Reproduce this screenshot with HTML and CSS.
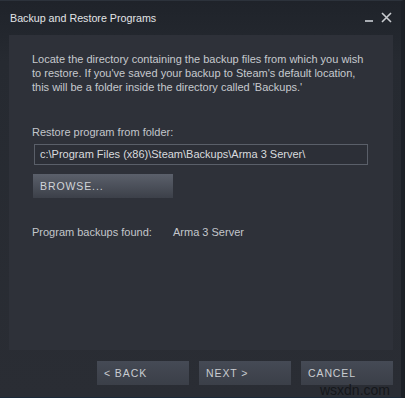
FILE: index.html
```html
<!DOCTYPE html>
<html>
<head>
  <meta charset="UTF-8">
  <title>Backup and Restore Programs</title>
  <link rel="stylesheet" href="styles.css">
</head>
<body>
  <div class="window">
    <div class="titlebar">
      <span class="title">Backup and Restore Programs</span>
      <div class="controls">
        <span class="minimize"></span>
        <svg class="close" width="11" height="11" viewBox="0 0 11 11">
          <path d="M1 1 L10 10 M10 1 L1 10" stroke="#c9ccd0" stroke-width="1.6"/>
        </svg>
      </div>
    </div>

    <div class="panel">
      <p class="intro">Locate the directory containing the backup files from which you wish to restore. If you've saved your backup to Steam's default location, this will be a folder inside the directory called 'Backups.'</p>

      <div class="label">Restore program from folder:</div>
      <div class="path-input">c:\Program Files (x86)\Steam\Backups\Arma 3 Server\</div>
      <button class="btn browse">BROWSE...</button>

      <div class="found">
        <span class="found-label">Program backups found:</span>
        <span class="found-value">Arma 3 Server</span>
      </div>
    </div>

    <div class="footer">
      <button class="btn nav">&lt; BACK</button>
      <button class="btn nav">NEXT &gt;</button>
      <button class="btn nav">CANCEL</button>
    </div>

    <span class="watermark">wsxdn.com</span>
  </div>
</body>
</html>
```

FILE: styles.css
```css
/* Steam dialog */
body {
  margin: 0;
  background-color: #1b1e23;
  font-family: "Liberation Sans", Arial, sans-serif;
  font-size: 11px;
}
.window {
  position: relative;
  width: 401px;
  height: 396px;
  background: linear-gradient(to bottom, #1f232a 0px, #262a31 60px, #2a2d34 100%);
  border-right: 3px solid #1c2027;
  border-bottom: 2px solid #1b2a3a;
  border-top: 1px solid #2c323b;
  box-sizing: content-box;
  display: flex;
  flex-direction: column;
}
.titlebar {
  height: 34px;
  display: flex;
  justify-content: space-between;
  align-items: center;
  padding: 0 9px 0 10px;
}
.title {
  color: #e2e4e7;
  font-size: 10.7px;
  margin-top: -1px;
}
.controls {
  display: flex;
  align-items: center;
  gap: 8px;
  margin-top: -2px;
}
.minimize {
  width: 8px;
  height: 2px;
  background-color: #a8acb2;
  margin-top: 8px;
}
.panel {
  margin: 0 8px 0 9px;
  height: 315px;
  background-color: #2e3139;
  padding: 17px 23px 0 23px;
  box-sizing: border-box;
  color: #c3c6cb;
}
.intro {
  margin: 0;
  width: 337px;
  line-height: 14px;
  color: #c6c9ce;
}
.label {
  margin-top: 32px;
}
.path-input {
  margin-top: 6px;
  margin-left: 2px;
  width: 334px;
  height: 21px;
  border: 1px solid #5a5f69;
  box-sizing: border-box;
  padding: 3px 0 0 5px;
  color: #d9dbde;
  background-color: #2c2f37;
}
.btn {
  font-family: "Liberation Sans", Arial, sans-serif;
  font-size: 10.5px;
  letter-spacing: 0.9px;
  border: none;
  text-align: left;
  padding: 0 0 0 7px;
  cursor: pointer;
}
.browse {
  display: block;
  margin-top: 9px;
  margin-left: 1px;
  width: 140px;
  height: 24px;
  color: #d2d5d9;
  background: linear-gradient(to bottom, #5b606b, #3c4049);
}
.found {
  margin-top: 28px;
  display: flex;
}
.found-label {
  width: 141px;
}
.footer {
  display: flex;
  justify-content: flex-end;
  gap: 10px;
  padding: 11px 8px 0 0;
}
.nav {
  width: 92px;
  height: 24px;
  color: #c9ccd1;
  background: linear-gradient(to bottom, #454a55, #3b3f48);
}
.watermark {
  position: absolute;
  right: 11px;
  bottom: -1px;
  font-family: "Liberation Sans", Arial, sans-serif;
  font-size: 14px;
  color: #15171b;
}
```
